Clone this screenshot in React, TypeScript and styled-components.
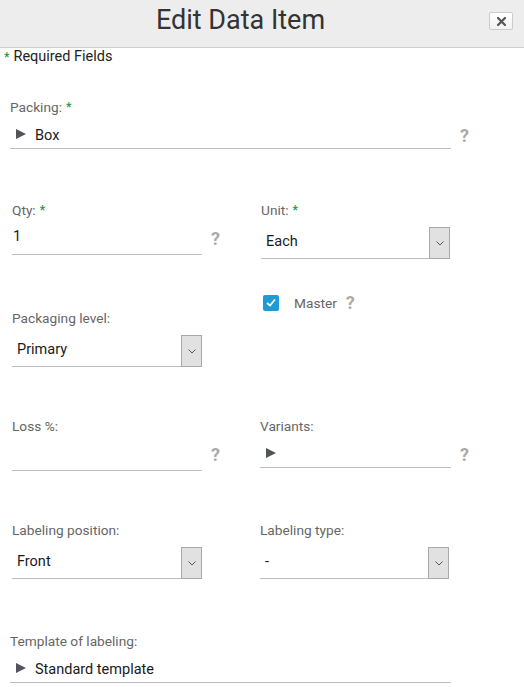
import styled, { createGlobalStyle } from 'styled-components'

const Global = createGlobalStyle`
  html, body {
    margin: 0;
    padding: 0;
    background: #fff;
  }
  body {
    font-family: Roboto, "Liberation Sans", Arial, sans-serif;
    color: #222;
  }
`

const Dialog = styled.div`
  width: 524px;
  min-height: 687px;
  background: #fff;
`

const Header = styled.div`
  height: 48px;
  box-sizing: border-box;
  border-bottom: 1px solid #cfcfcf;
  background: #ededed;
  display: flex;
  align-items: flex-start;
  padding: 4px 11px 0 0;
`

const Title = styled.h1`
  flex: 1;
  margin: 0;
  text-align: center;
  font-size: 27px;
  line-height: 32px;
  font-weight: 400;
  color: #333;
`

const CloseButton = styled.button`
  width: 24px;
  height: 18px;
  margin: 8px 0 0 8px;
  padding: 0;
  box-sizing: border-box;
  border: 1px solid #cbcbcb;
  border-radius: 2px;
  background: linear-gradient(#fff, #f2f2f2);
  display: flex;
  align-items: center;
  justify-content: center;
  cursor: pointer;
`

const Body = styled.div`
  padding: 0 0 0 10px;
`

const RequiredNote = styled.div`
  margin-left: -10px;
  font-size: 14.5px;
  line-height: 18px;
  color: #222;
`

const Star = styled.span`
  color: #2a9a3c;
  font-weight: 700;
  font-size: 12px;
  vertical-align: top;
  margin: 0 4px;
`

const Section = styled.div<{ $top: number }>`
  margin-top: ${p => p.$top}px;
`

const Columns = styled.div<{ $top: number }>`
  margin-top: ${p => p.$top}px;
  padding-left: 2px;
  display: grid;
  grid-template-columns: 248px 1fr;
  align-items: start;
`

const Cell = styled.div<{ $offset?: number; $shift?: number }>`
  margin-top: ${p => p.$offset || 0}px;
  margin-left: ${p => p.$shift || 0}px;
`

const Label = styled.div`
  height: 16px;
  font-size: 13.7px;
  line-height: 16px;
  color: #666;
  white-space: nowrap;
`

const FieldRow = styled.div`
  display: flex;
  align-items: flex-end;
  gap: 9px;
`

const Help = styled.span<{ $drop: number }>`
  font-size: 18px;
  line-height: 18px;
  font-weight: 700;
  color: #a9a9a9;
  margin-bottom: ${p => p.$drop}px;
  cursor: help;
`

const LookupBox = styled.div<{ $w: number }>`
  width: ${p => p.$w}px;
  height: 34px;
  box-sizing: border-box;
  border-bottom: 1px solid #bdbdbd;
  display: flex;
  align-items: flex-end;
  padding: 0 0 2px 6px;
  font-size: 14.5px;
  line-height: 20px;
  color: #1a1a1a;
`

const Arrow = styled.span`
  width: 0;
  height: 0;
  border-left: 10px solid #50555b;
  border-top: 5px solid transparent;
  border-bottom: 5px solid transparent;
  margin: 0 9px 7px 0;
`

const InputBox = styled.div<{ $w: number }>`
  width: ${p => p.$w}px;
  height: 37px;
  box-sizing: border-box;
  border-bottom: 1px solid #bdbdbd;
  display: flex;
  align-items: flex-end;
  padding: 0 0 7px 1px;
  font-size: 14.5px;
  line-height: 20px;
  color: #1a1a1a;
`

const SelectBox = styled.div<{ $w: number }>`
  width: ${p => p.$w}px;
  height: 32px;
  margin-top: 9px;
  display: flex;
`

const SelectValue = styled.div`
  flex: 1;
  box-sizing: border-box;
  border-bottom: 1px solid #bdbdbd;
  display: flex;
  align-items: flex-end;
  padding: 0 0 6px 5px;
  font-size: 14.5px;
  line-height: 20px;
  color: #1a1a1a;
`

const SelectButton = styled.div`
  width: 21px;
  box-sizing: border-box;
  border: 1px solid #a9a9a9;
  background: #e1e1e1;
  display: flex;
  align-items: center;
  justify-content: center;
`

const CheckRow = styled.div`
  display: flex;
  align-items: center;
  height: 17px;
  padding-left: 3px;
`

const CheckBox = styled.span`
  width: 16px;
  height: 16px;
  border-radius: 2px;
  background: #1d9bd7;
  display: flex;
  align-items: center;
  justify-content: center;
`

const CheckText = styled.span`
  margin: 0 9px 0 15px;
  font-size: 13.7px;
  color: #666;
`

const Chevron = () => (
  <svg width="8" height="5" viewBox="0 0 8 5">
    <polyline points="0.5,0.5 4,4 7.5,0.5" fill="none" stroke="#555" strokeWidth="1" />
  </svg>
)

function Lookup({ label, value = '', width, required = false, help = true }) {
  return (
    <>
      <Label>{label}{required && <Star>*</Star>}</Label>
      <FieldRow>
        <LookupBox $w={width}><Arrow />{value}</LookupBox>
        {help && <Help $drop={4}>?</Help>}
      </FieldRow>
    </>
  )
}

function TextInput({ label, value = '', required = false }) {
  return (
    <>
      <Label>{label}{required && <Star>*</Star>}</Label>
      <FieldRow>
        <InputBox $w={190}>{value}</InputBox>
        <Help $drop={7}>?</Help>
      </FieldRow>
    </>
  )
}

function Select({ label, value, width = 190, required = false }) {
  return (
    <>
      <Label>{label}{required && <Star>*</Star>}</Label>
      <SelectBox $w={width}>
        <SelectValue>{value}</SelectValue>
        <SelectButton><Chevron /></SelectButton>
      </SelectBox>
    </>
  )
}

export default function App() {
  return (
    <Dialog>
      <Global />
      <Header>
        <Title>Edit Data Item</Title>
        <CloseButton aria-label="Close">
          <svg width="9" height="9" viewBox="0 0 9 9">
            <path d="M1 1L8 8M8 1L1 8" stroke="#555" strokeWidth="2.2" strokeLinecap="square" />
          </svg>
        </CloseButton>
      </Header>
      <Body>
        <RequiredNote><Star>*</Star>Required Fields</RequiredNote>

        <Section $top={33}>
          <Lookup label="Packing:" value="Box" width={441} required />
        </Section>

        <Columns $top={53}>
          <Cell><TextInput label="Qty:" value="1" required /></Cell>
          <Cell $shift={1}><Select label="Unit:" value="Each" width={189} required /></Cell>
        </Columns>

        <Columns $top={35}>
          <Cell $offset={16}><Select label="Packaging level:" value="Primary" /></Cell>
          <Cell>
            <CheckRow>
              <CheckBox>
                <svg width="10" height="9" viewBox="0 0 10 9">
                  <polyline points="1,5 4,7.5 9,1.5" fill="none" stroke="#fff" strokeWidth="1.8" />
                </svg>
              </CheckBox>
              <CheckText>Master</CheckText>
              <Help $drop={0}>?</Help>
            </CheckRow>
          </Cell>
        </Columns>

        <Columns $top={51}>
          <Cell><TextInput label="Loss %:" /></Cell>
          <Cell><Lookup label="Variants:" width={191} /></Cell>
        </Columns>

        <Columns $top={51}>
          <Cell><Select label="Labeling position:" value="Front" /></Cell>
          <Cell><Select label="Labeling type:" value="-" width={189} /></Cell>
        </Columns>

        <Section $top={54}>
          <Lookup label="Template of labeling:" value="Standard template" width={441} help={false} />
        </Section>
      </Body>
    </Dialog>
  )
}
